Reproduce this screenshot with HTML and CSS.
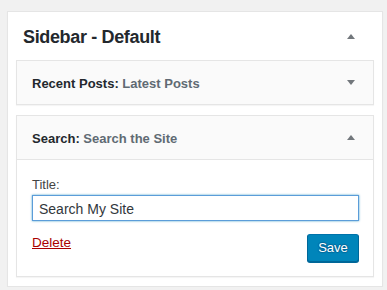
FILE: index.html
```html
<!DOCTYPE html>
<html>
<head>
<meta charset="utf-8">
<link rel="stylesheet" href="styles.css">
</head>
<body>
<div class="sidebar">
  <div class="sidebar-head">
    <h2 class="sidebar-title">Sidebar - Default</h2>
    <span class="arrow up"></span>
  </div>
  <div class="widgets">
    <div class="widget">
      <div class="widget-top">
        <h3 class="widget-title">Recent Posts<span class="sep">:</span> <span class="in-title">Latest Posts</span></h3>
        <span class="arrow down"></span>
      </div>
    </div>
    <div class="widget open">
      <div class="widget-top">
        <h3 class="widget-title">Search<span class="sep">:</span> <span class="in-title">Search the Site</span></h3>
        <span class="arrow up"></span>
      </div>
      <div class="widget-inside">
        <label class="field-label" for="t">Title:</label>
        <input class="field" id="t" type="text" value="Search My Site">
        <div class="actions">
          <a class="delete" href="#">Delete</a>
          <button class="save">Save</button>
        </div>
      </div>
    </div>
  </div>
</div>
</body>
</html>
```

FILE: styles.css
```css
html, body {
  margin: 0;
  padding: 0;
  background: #f1f1f1;
  font-family: "Liberation Sans", Arial, sans-serif;
  color: #23282d;
}
body {
  padding: 11px 5px 0 7px;
}
.sidebar {
  width: 374px;
  height: 274px;
  background: #fff;
  border: 1px solid #e5e5e5;
  box-shadow: 0 1px 1px rgba(0,0,0,0.04);
}
.sidebar-head {
  height: 48px;
  display: flex;
  align-items: center;
  justify-content: space-between;
  padding: 0 27px 0 15px;
}
.sidebar-title {
  margin: 0;
  font-size: 18px;
  font-weight: 700;
  color: #23282d;
  letter-spacing: -0.35px;
  padding-top: 2px;
}
.arrow {
  width: 0;
  height: 0;
  border-left: 4px solid transparent;
  border-right: 4px solid transparent;
}
.arrow.up { border-bottom: 5px solid #72777c; }
.arrow.down { border-top: 5px solid #72777c; }
.widgets {
  padding: 0 8px;
}
.widget {
  border: 1px solid #e5e5e5;
  background: #fafafa;
  box-shadow: 0 1px 1px rgba(0,0,0,0.04);
  margin-bottom: 10px;
}
.widget-top {
  height: 43px;
  display: flex;
  align-items: center;
  justify-content: space-between;
  padding: 0 18px 0 15px;
}
.widget-title {
  margin: 0;
  font-size: 13px;
  font-weight: 700;
  color: #23282d;
  padding-top: 1px;
}
.in-title {
  color: #606a73;
}
.open .widget-top {
  border-bottom: 1px solid #e5e5e5;
}
.widget-inside {
  background: #fff;
  padding: 16px 14px 14px 15px;
}
.field-label {
  display: block;
  font-size: 13px;
  line-height: 18px;
  color: #444;
  margin-bottom: 1px;
}
.field {
  display: block;
  box-sizing: border-box;
  width: 327px;
  height: 26px;
  margin: 0;
  padding: 2px 6px 0;
  border: 1px solid #5b9dd9;
  box-shadow: 0 0 2px rgba(30,140,190,0.8);
  font-family: "Liberation Sans", Arial, sans-serif;
  font-size: 14px;
  color: #32373c;
  outline: none;
}
.actions {
  display: flex;
  justify-content: space-between;
  align-items: flex-start;
  margin-top: 12px;
}
.delete {
  color: #a00;
  font-size: 13.5px;
  line-height: 18px;
  text-decoration: underline;
  margin-top: 1px;
}
.save {
  box-sizing: border-box;
  width: 52px;
  height: 28px;
  margin-top: 1px;
  background: #0085ba;
  border: 1px solid #0073aa;
  border-color: #0073aa #006799 #006799;
  border-radius: 3px;
  box-shadow: 0 1px 0 #006799;
  color: #fff;
  font-family: "Liberation Sans", Arial, sans-serif;
  font-size: 13px;
  padding: 0 0 1px;
  text-shadow: 0 -1px 1px #006799, 1px 0 1px #006799, 0 1px 1px #006799, -1px 0 1px #006799;
}
```
